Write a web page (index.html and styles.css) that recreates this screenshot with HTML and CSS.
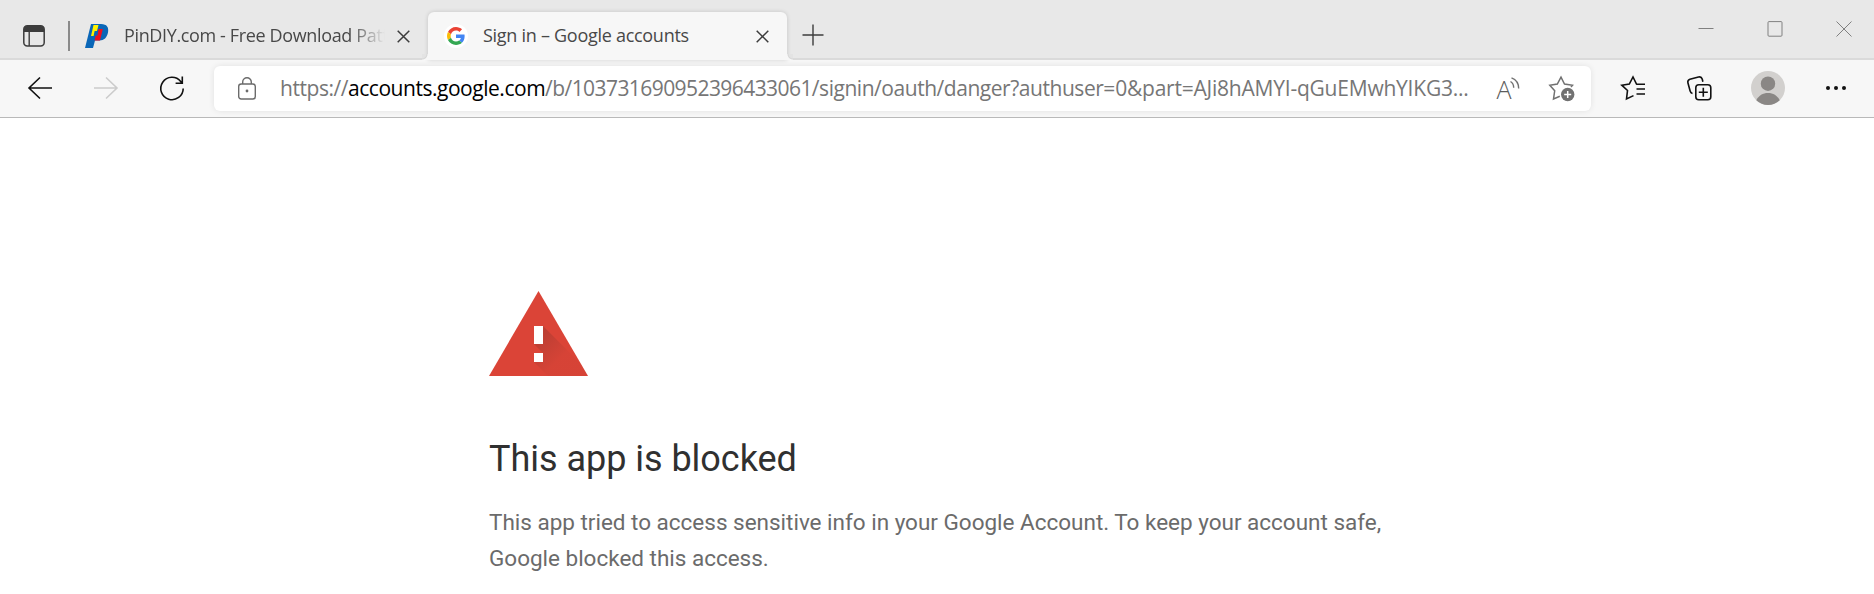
FILE: index.html
```html
<!DOCTYPE html>
<html lang="en">
<head>
  <meta charset="UTF-8">
  <meta name="viewport" content="width=device-width, initial-scale=1.0">
  <title>Sign in – Google accounts</title>
  <link rel="stylesheet" href="styles.css">
</head>
<body>
  <!-- Tab strip -->
  <header class="tab-strip">
    <svg class="tab-menu" width="22" height="22" viewBox="0 0 22 22">
      <rect x="0.8" y="0.8" width="20.4" height="20.2" rx="3.5" fill="none" stroke="#3c3c3c" stroke-width="1.5"/>
      <path d="M1 7V4a3 3 0 0 1 3-3h14a3 3 0 0 1 3 3v3z" fill="#3c3c3c"/>
      <path d="M6.2 7v14" stroke="#3c3c3c" stroke-width="1.4"/>
    </svg>
    <div class="divider"></div>

    <div class="tab">
      <svg class="favicon" width="24" height="24" viewBox="0 0 24 24">
        <path d="M6 0h10c6 0 8 3.500 7 8.500-1 5-4 8-8.500 8H10L8 24H0z" fill="#0a66b7"/>
        <path d="M8.500 1h5l-1.500 6h-2.400L8.600 12H6z" fill="#fff200"/>
        <path d="M13.500 5h4.300l-2.800 11.500H9.500l1.200-5h1.800z" fill="#ee1020"/>
      </svg>
      <span class="tab-title title-first">PinDIY.com - Free Download Patterns</span>
      <svg class="close" width="13" height="13" viewBox="0 0 13 13"><path d="M.7.700l11.600 11.600M12.300.7L.7 12.300"/></svg>
    </div>

    <div class="tab active">
      <span class="favicon-disc">
        <svg width="18" height="18" viewBox="0 0 48 48">
          <path fill="#EA4335" d="M24 9.500c3.540 0 6.710 1.220 9.210 3.600l6.850-6.850C35.900 2.380 30.470 0 24 0 14.620 0 6.510 5.380 2.560 13.220l7.980 6.190C12.430 13.720 17.740 9.500 24 9.500z"/>
          <path fill="#4285F4" d="M46.980 24.550c0-1.570-.15-3.090-.38-4.550H24v9.020h12.940c-.58 2.960-2.260 5.480-4.780 7.180l7.730 6c4.510-4.180 7.090-10.360 7.090-17.650z"/>
          <path fill="#FBBC05" d="M10.530 28.590c-.48-1.450-.76-2.990-.76-4.590s.27-3.140.76-4.590l-7.980-6.190C.92 16.460 0 20.120 0 24c0 3.880.92 7.540 2.560 10.780l7.970-6.190z"/>
          <path fill="#34A853" d="M24 48c6.480 0 11.930-2.130 15.890-5.810l-7.730-6c-2.150 1.450-4.920 2.300-8.160 2.300-6.260 0-11.570-4.220-13.470-9.910l-7.980 6.190C6.510 42.620 14.620 48 24 48z"/>
        </svg>
      </span>
      <span class="tab-title">Sign in – Google accounts</span>
      <svg class="close" width="13" height="13" viewBox="0 0 13 13"><path d="M.7.700l11.600 11.600M12.300.7L.7 12.300"/></svg>
    </div>

    <svg class="new-tab" width="22" height="22" viewBox="0 0 22 22"><path d="M11 0.500v21M0.500 11h21"/></svg>

    <div class="window-controls">
      <svg width="16" height="16" viewBox="0 0 16 16"><path d="M0.500 7.500h15"/></svg>
      <svg width="16" height="16" viewBox="0 0 16 16"><rect x="1" y="0.600" width="14" height="14.600" rx="1"/></svg>
      <svg width="16" height="16" viewBox="0 0 16 16"><path d="M0.500 0.500l15 15M15.500 0.500l-15 15"/></svg>
    </div>
  </header>

  <!-- Toolbar -->
  <nav class="toolbar">
    <div class="nav-buttons">
      <svg width="24" height="24" viewBox="0 0 24 24"><path d="M24 12H1M12 1.500L1 12l11 10.500"/></svg>
      <svg class="disabled" width="24" height="24" viewBox="0 0 24 24"><path d="M0 12h23M12 1.500L23 12 12 22.500"/></svg>
      <svg width="24" height="24" viewBox="0 0 24 24"><path d="M23.200 12.500A11.200 11.200 0 1 1 20.700 5.400l1.500 1.800M22.300.5v6.700h-6.700"/></svg>
    </div>

    <div class="address-bar">
      <svg class="lock" width="18" height="23" viewBox="0 0 18 23">
        <rect x="0.700" y="7" width="16.600" height="15" rx="2.500"/>
        <path d="M4.700 7V5a4.300 4.300 0 0 1 8.600 0v2"/>
        <circle cx="9" cy="14" r="1.400" fill="#6b6b6b" stroke="none"/>
      </svg>
      <div class="url"><span class="scheme">https://</span><span class="host">accounts.google.com</span><span class="account">/b/103731690952396433061</span><span class="path">/signin/oauth/danger?authuser</span><span class="query">=0&amp;part=AJi8hAMYI-qGuEMwhYIKG3...</span></div>
      <svg class="read-aloud" width="24" height="24" viewBox="0 0 24 24">
        <text x="-0.500" y="21.500">A</text>
        <path d="M13.500 4.500c2 1.300 3.200 3.500 3.200 6.200M14.500.8c4.500 1.700 7.200 5.700 7.200 10.700"/>
      </svg>
      <svg class="add-favorite" width="26" height="26" viewBox="0 0 26 26">
        <path d="M10.800 20.300l-6.300 2.700 1.200-8.200L.8 9.200l7.500-1.200L12 1.200l3.500 6.800 8 1.200-1.500 1.700"/>
        <circle cx="18.700" cy="18.500" r="6.700" fill="#717171" stroke="none"/>
        <path d="M18.700 15v7M15.200 18.500h7" stroke="#fff"/>
      </svg>
    </div>

    <div class="actions">
      <svg width="25" height="24" viewBox="0 0 25 24"><path d="M12.500 19.600L5.500 23l1-8.500L.8 9.200l7.500-1.200L12 1l3.500 7 .3.300h8.200M15.500 13H24M15.500 18H24"/></svg>
      <svg width="25" height="25" viewBox="0 0 25 25">
        <rect x="8.800" y="8.800" width="15" height="15" rx="3"/>
        <path d="M16.300 11.800v9M11.800 16.300h9M5.500 17.500a3 3 0 0 1-2.300-2.300L.9 6.800a3 3 0 0 1 2-3.500l8.600-2.300a3 3 0 0 1 3.700 2l.7 2.800"/>
      </svg>
      <svg class="avatar" width="34" height="34" viewBox="0 0 34 34">
        <circle cx="17" cy="17" r="17" fill="#d2d0ce"/>
        <circle cx="17" cy="12.700" r="7.200" fill="#8a8785"/>
        <path d="M5.300 29.300C7.500 24.500 12 22 17 22s9.500 2.500 11.700 7.300A17 17 0 0 1 17 34 17 17 0 0 1 5.300 29.300z" fill="#8a8785"/>
      </svg>
      <svg class="more" width="20" height="4" viewBox="0 0 20 4"><circle cx="2" cy="2" r="2"/><circle cx="10" cy="2" r="2"/><circle cx="18" cy="2" r="2"/></svg>
    </div>
  </nav>

  <!-- Page -->
  <main class="page">
    <svg class="warning" width="99" height="85" viewBox="0 0 99 85">
      <defs>
        <linearGradient id="shade" gradientUnits="userSpaceOnUse" x1="50" y1="45" x2="72" y2="67">
          <stop offset="0" stop-color="#3e2723" stop-opacity=".2"/>
          <stop offset="1" stop-color="#3e2723" stop-opacity=".03"/>
        </linearGradient>
        <clipPath id="triangle"><path d="M49.500 0L99 85H0z"/></clipPath>
      </defs>
      <path d="M49.500 0L99 85H0z" fill="#db4437"/>
      <path d="M54 35l50 50H59L45 71l9-9-9-9z" fill="url(#shade)" clip-path="url(#triangle)"/>
      <path d="M45 35h9v18h-9zM45 62h9v9h-9z" fill="#fff"/>
    </svg>
    <h1>This app is blocked</h1>
    <p>This app tried to access sensitive info in your Google Account. To keep your account safe, Google blocked this access.</p>
  </main>
</body>
</html>
```

FILE: styles.css
```css
/* General Styles */
body {
  margin: 0;
  background: #fff;
  font-family: "Open Sans", "Noto Sans", sans-serif;
  overflow: hidden;
}

svg {
  display: block;
  flex: none;
  fill: none;
  overflow: visible;
}

/* Tab Strip */
.tab-strip {
  display: flex;
  box-sizing: border-box;
  height: 60px;
  padding-left: 23px;
  background: linear-gradient(#e8e8e8 58px, #dadada 58px);
}

.tab-menu {
  margin-top: 25px;
}

.divider {
  width: 2px;
  height: 30px;
  margin: 21px 0 0 23px;
  background: #8a8a8a;
}

.tab {
  display: flex;
  align-items: center;
  box-sizing: border-box;
  width: 358px;
  height: 48px;
  margin-top: 12px;
  padding: 0 18px 0 15px;
}

.tab.active {
  position: relative;
  width: 359px;
  padding-left: 16px;
  background: #f7f7f7;
  border-radius: 6px 6px 0 0;
  box-shadow: 0 0 4px rgba(0, 0, 0, 0.16);
}

/* Curved feet of the active tab */
.tab.active::before,
.tab.active::after {
  content: "";
  position: absolute;
  bottom: 0;
  width: 6px;
  height: 6px;
}

.tab.active::before {
  left: -6px;
  background: radial-gradient(circle at 0 0, #e3e3e3 4px, #d6d6d6 5px, #f7f7f7 6px);
}

.tab.active::after {
  right: -6px;
  background: radial-gradient(circle at 100% 0, #e3e3e3 4px, #d6d6d6 5px, #f7f7f7 6px);
}

.favicon-disc {
  display: flex;
  align-items: center;
  justify-content: center;
  width: 24px;
  height: 24px;
  border-radius: 50%;
  background: #fff;
}

.tab-title {
  flex: 1;
  margin: 0 12px 0 15px;
  padding-bottom: 2px;
  overflow: hidden;
  color: #484848;
  font-size: 18px;
  line-height: 26px;
  letter-spacing: -0.28px;
  white-space: nowrap;
}

.title-first {
  letter-spacing: -0.36px;
  -webkit-mask-image: linear-gradient(to right, #000 225px, transparent 261px);
  mask-image: linear-gradient(to right, #000 225px, transparent 261px);
}

.close {
  stroke: #3c3c3c;
  stroke-width: 1.5;
}

.new-tab {
  margin: 24px 0 0 15px;
  stroke: #3c3c3c;
  stroke-width: 1.4;
}

.window-controls {
  display: flex;
  gap: 53px;
  margin: 21px 22px 0 auto;
  stroke: #808080;
}

/* Toolbar */
.toolbar {
  display: flex;
  align-items: center;
  box-sizing: border-box;
  height: 58px;
  background: #f7f7f7;
  border-bottom: 1px solid #b9b9b9;
}

.nav-buttons {
  display: flex;
  box-sizing: border-box;
  gap: 42px;
  width: 214px;
  padding: 0 0 2px 28px;
  stroke: #111;
  stroke-width: 1.6;
}

.disabled {
  stroke: #ccc;
}

.address-bar {
  display: flex;
  align-items: center;
  box-sizing: border-box;
  width: 1377px;
  height: 45px;
  padding: 0 16px 0 24px;
  background: #fff;
  border-radius: 6px;
  box-shadow: 0 0 6px rgba(0, 0, 0, 0.09);
}

.lock {
  stroke: #6b6b6b;
  stroke-width: 1.4;
}

.url {
  flex: 1;
  margin-left: 24px;
  padding-bottom: 2px;
  color: #767676;
  font-size: 21px;
  line-height: 30px;
  white-space: nowrap;
}

.scheme {
  letter-spacing: -0.45px;
}

.host {
  color: #000;
  letter-spacing: -0.47px;
}

.account {
  letter-spacing: -0.57px;
}

.path {
  letter-spacing: -0.46px;
}

.query {
  letter-spacing: -0.22px;
}

.read-aloud {
  margin-right: 28px;
  stroke: #717171;
  stroke-width: 1.4;
}

.read-aloud text {
  fill: #5c5c5c;
  stroke: none;
  font-size: 25px;
  font-weight: 300;
}

.add-favorite {
  stroke: #717171;
  stroke-width: 1.5;
}

.actions {
  display: flex;
  align-items: center;
  margin-left: 30px;
  padding-bottom: 1px;
  stroke: #111;
  stroke-width: 1.6;
  gap: 41px;
}

.avatar {
  stroke: none;
  margin-left: -2px;
}

.more {
  fill: #111;
  stroke: none;
}

/* Page */
.page {
  width: 900px;
  padding: 173px 0 0 489px;
  font-family: Roboto, sans-serif;
}

h1 {
  margin: 60px 0 0;
  color: #303030;
  font-size: 36px;
  font-weight: 400;
  line-height: 46px;
  letter-spacing: -0.03px;
}

p {
  margin: 22px 0 0;
  color: #6b6b6b;
  font-size: 22.5px;
  line-height: 36px;
  letter-spacing: -0.01px;
}
```
